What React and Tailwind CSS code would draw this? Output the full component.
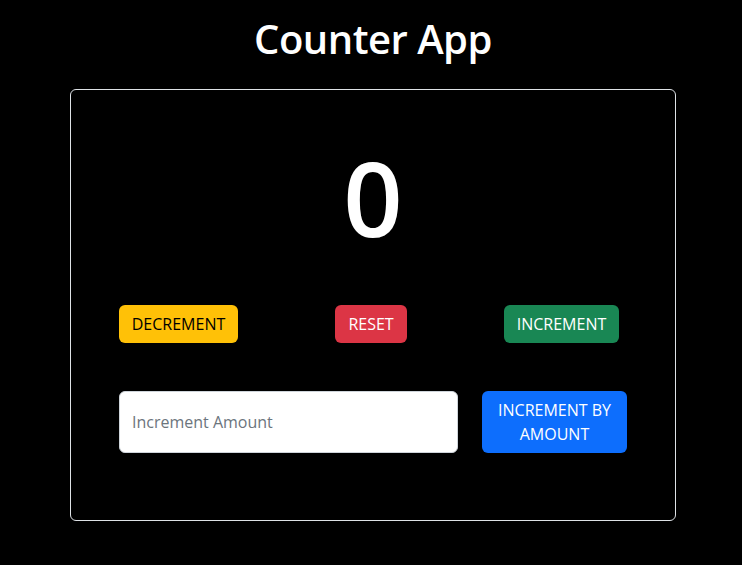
import React, { useState } from "react";

const App = () => {
  const [count, setCount] = useState(0);
  const [amount, setAmount] = useState("");

  return (
    <div
      className="min-h-[565px] w-full bg-black flex flex-col items-center pl-[4px] text-white"
      style={{ fontFamily: '"Open Sans", "Noto Sans", sans-serif' }}
    >
      <h1 className="mt-[15px] text-[40px] leading-[48px] font-semibold tracking-[-0.5px]">Counter App</h1>

      <div className="mt-[26px] w-[606px] h-[432px] border border-[#dee2e6] rounded-md flex flex-col items-center">
        <div className="mt-[55px] text-[104px] leading-none font-semibold">{count}</div>

        <div className="mt-[56px] mr-[8px] w-[500px] flex justify-between text-[16px] leading-6">
          <button
            onClick={() => setCount(count - 1)}
            className="w-[119px] h-[38px] rounded-md bg-[#ffc107] text-black"
          >
            DECREMENT
          </button>
          <button
            onClick={() => setCount(0)}
            className="w-[72px] h-[38px] rounded-md bg-[#dc3545] text-white"
          >
            RESET
          </button>
          <button
            onClick={() => setCount(count + 1)}
            className="w-[115px] h-[38px] rounded-md bg-[#198754] text-white"
          >
            INCREMENT
          </button>
        </div>

        <div className="mt-[48px] w-[508px] flex gap-6 text-[16px] leading-6">
          <input
            value={amount}
            onChange={(e) => setAmount(e.target.value)}
            placeholder="Increment Amount"
            className="w-[339px] h-[62px] px-3 rounded-md bg-white border border-[#ced4da] text-black placeholder:text-[#6c757d] outline-none"
          />
          <button
            onClick={() => setCount(count + (Number(amount) || 0))}
            className="w-[145px] h-[62px] rounded-md bg-[#0d6efd] text-white px-3"
          >
            INCREMENT BY AMOUNT
          </button>
        </div>
      </div>
    </div>
  );
};

export default App;
